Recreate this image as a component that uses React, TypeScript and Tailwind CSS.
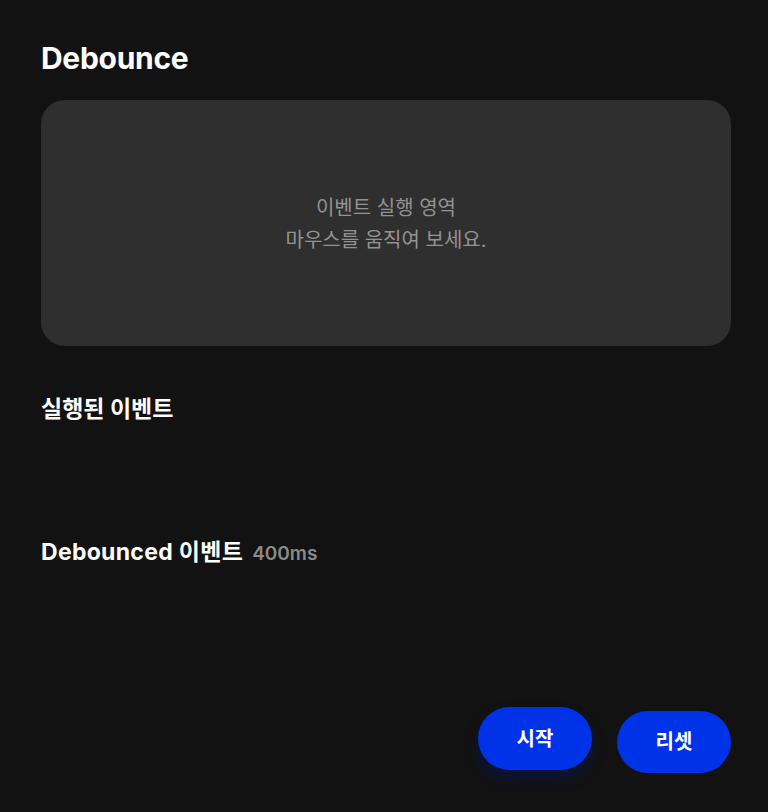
export default function App() {
  const font = { fontFamily: 'Inter, "Noto Sans CJK KR", sans-serif' };
  return (
    <div
      className="w-[768px] h-[812px] bg-[#121212] text-white flex flex-col pl-[41px] pr-[37px] pt-[39px]"
      style={font}
    >
      <h1 className="text-[30px] leading-[38px] font-bold tracking-[-0.3px]">Debounce</h1>

      <div className="mt-[23px] h-[246px] rounded-[24px] bg-[#2f2f2f] flex flex-col items-center justify-center">
        <p className="text-[20px] leading-[32px] text-[#939393] text-center pt-[2px]">
          이벤트 실행 영역
          <br />
          마우스를 움직여 보세요.
        </p>
      </div>

      <section className="mt-[48px]">
        <h2 className="text-[23px] leading-[30px] font-bold">실행된 이벤트</h2>
        <div className="h-[113px]" />
      </section>

      <section>
        <h2 className="text-[23px] leading-[30px] font-bold flex items-baseline gap-[9px]">
          <span className="tracking-[0.3px]">Debounced 이벤트</span>
          <span className="text-[19px] text-[#8a8a8a] font-semibold">400ms</span>
        </h2>
      </section>

      <div className="mt-[138px] flex justify-end gap-[25px]">
        <button className="w-[114px] h-[63px] rounded-full bg-[#0033e8] text-[20px] font-bold shadow-[0_8px_14px_rgba(0,20,120,0.45)]">
          시작
        </button>
        <button className="mt-[4px] w-[114px] h-[62px] rounded-full bg-[#0033e8] text-[20px] font-bold">
          리셋
        </button>
      </div>
    </div>
  );
}
